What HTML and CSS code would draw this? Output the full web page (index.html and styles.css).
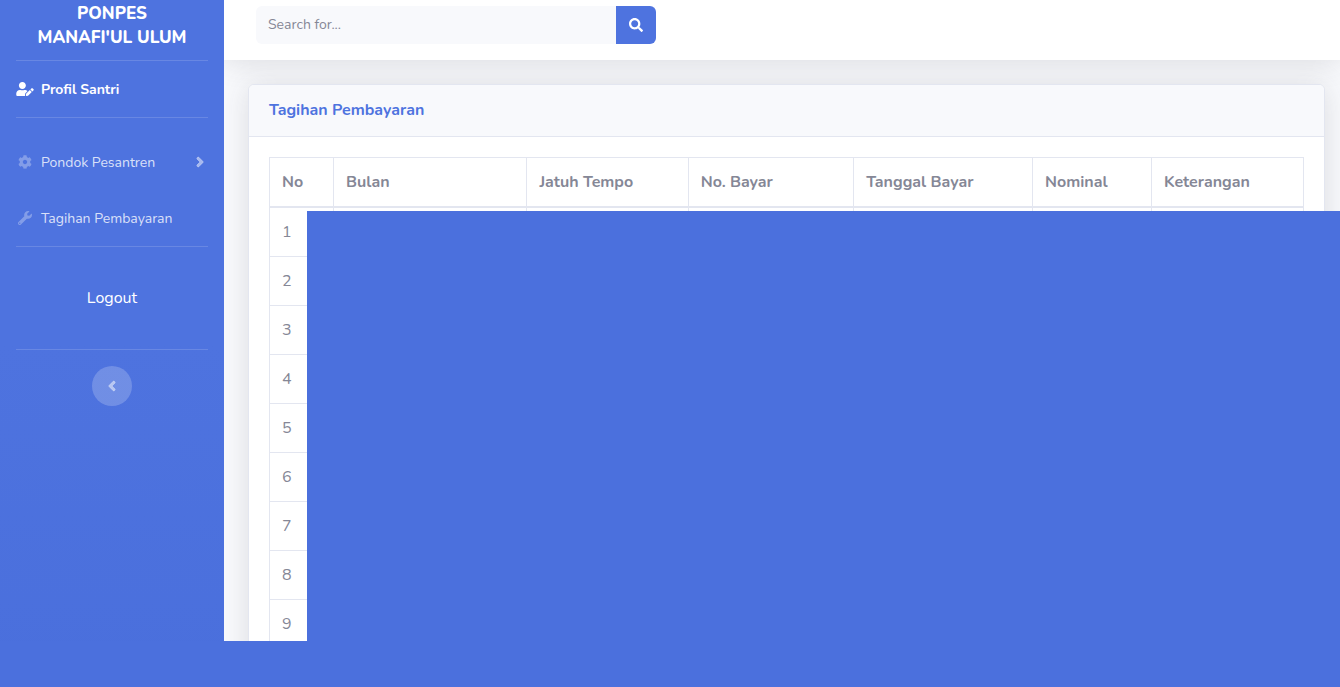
FILE: index.html
```html
<!DOCTYPE html>
<html lang="id">
<head>
<meta charset="utf-8">
<meta name="viewport" content="width=device-width, initial-scale=1">
<title>Tagihan Pembayaran</title>
<link rel="stylesheet" href="styles.css">
</head>
<body>
<div class="wrapper">
  <nav class="sidebar">
    <a class="brand" href="#">PONPES<br>MANAFI'UL ULUM</a>
    <hr class="divider">
    <a class="nav-link active" href="#">
      <svg class="icon" viewBox="0 0 640 512" aria-hidden="true"><path d="M224 256c70.7 0 128-57.3 128-128S294.7 0 224 0 96 57.3 96 128s57.3 128 128 128zm89.6 32h-16.7c-22.2 10.2-46.9 16-72.9 16s-50.6-5.8-72.9-16h-16.7C60.2 288 0 348.2 0 422.4V464c0 26.5 21.5 48 48 48h274.9c-2.4-6.8-3.4-14-2.6-21.3l6.8-60.9 1.2-11.1 7.9-7.9 77.3-77.3c-24.5-27.7-60-45.5-99.9-45.5zm45.3 145.3l-6.8 61c-1.1 10.2 7.5 18.8 17.6 17.6l60.9-6.8 137.9-137.9-71.7-71.7-137.9 137.8zM633 268.9L595.1 231c-9.3-9.3-24.5-9.3-33.8 0l-37.8 37.8-4.1 4.1 71.8 71.7 41.8-41.8c9.3-9.4 9.3-24.5 0-33.9z"/></svg>
      <span class="nav-text">Profil Santri</span>
    </a>
    <hr class="divider divider-gap">
    <a class="nav-link" href="#">
      <svg class="icon" viewBox="0 0 512 512" aria-hidden="true"><path d="M487.4 315.7l-42.6-24.6c4.3-23.2 4.3-47 0-70.2l42.6-24.6c4.9-2.8 7.1-8.6 5.5-14-11.1-35.6-30-67.8-54.7-94.6-3.8-4.1-10-5.1-14.8-2.3L380.8 110c-17.9-15.4-38.5-27.3-60.8-35.1V25.8c0-5.6-3.9-10.5-9.4-11.7-36.7-8.2-74.3-7.8-109.2 0-5.5 1.2-9.4 6.1-9.4 11.7V75c-22.2 7.9-42.8 19.8-60.8 35.1L88.7 85.5c-4.9-2.8-11-1.9-14.8 2.3-24.7 26.7-43.6 58.9-54.7 94.6-1.7 5.4.6 11.2 5.5 14L67.3 221c-4.3 23.2-4.3 47 0 70.2l-42.6 24.6c-4.9 2.8-7.1 8.6-5.5 14 11.1 35.6 30 67.8 54.7 94.6 3.8 4.1 10 5.1 14.8 2.3l42.6-24.6c17.9 15.4 38.5 27.3 60.8 35.1v49.2c0 5.6 3.9 10.5 9.4 11.7 36.7 8.2 74.3 7.8 109.2 0 5.5-1.2 9.4-6.1 9.4-11.7v-49.2c22.2-7.9 42.8-19.8 60.8-35.1l42.6 24.6c4.9 2.8 11 1.9 14.8-2.3 24.7-26.7 43.6-58.9 54.7-94.6 1.5-5.5-.7-11.3-5.6-14.1zM256 336c-44.1 0-80-35.9-80-80s35.9-80 80-80 80 35.9 80 80-35.9 80-80 80z"/></svg>
      <span class="nav-text">Pondok Pesantren</span>
      <svg class="caret" viewBox="0 0 256 512" aria-hidden="true"><path d="M224.3 273l-136 136c-9.4 9.4-24.6 9.4-33.9 0l-22.6-22.6c-9.4-9.4-9.4-24.6 0-33.9l96.4-96.4-96.4-96.4c-9.4-9.4-9.4-24.6 0-33.9L54.3 103c9.4-9.4 24.6-9.4 33.9 0l136 136c9.5 9.4 9.5 24.6.1 34z"/></svg>
    </a>
    <a class="nav-link" href="#">
      <svg class="icon" viewBox="0 0 512 512" aria-hidden="true"><path d="M507.73 109.1c-2.24-9.03-13.54-12.09-20.12-5.51l-74.36 74.36-67.88-11.31-11.31-67.88 74.36-74.36c6.62-6.62 3.43-17.9-5.66-20.16-47.38-11.74-99.55.91-136.58 37.93-39.64 39.64-50.55 97.1-34.05 147.2L18.74 402.76c-24.99 24.99-24.99 65.51 0 90.5 24.99 24.99 65.51 24.99 90.5 0l213.21-213.21c50.12 16.71 107.47 5.68 147.37-34.22 37.07-37.07 49.7-89.32 37.91-136.73zM64 472c-13.25 0-24-10.75-24-24 0-13.26 10.75-24 24-24s24 10.74 24 24c0 13.25-10.75 24-24 24z"/></svg>
      <span class="nav-text">Tagihan Pembayaran</span>
    </a>
    <hr class="divider">
    <a class="logout" href="#">Logout</a>
    <hr class="divider">
    <button class="collapse-btn" type="button" aria-label="Toggle sidebar">
      <svg viewBox="0 0 256 512" aria-hidden="true"><path d="M31.7 239l136-136c9.4-9.4 24.6-9.4 33.9 0l22.6 22.6c9.4 9.4 9.4 24.6 0 33.9L127.9 256l96.4 96.4c9.4 9.4 9.4 24.6 0 33.9L201.7 409c-9.4 9.4-24.6 9.4-33.9 0l-136-136c-9.5-9.4-9.5-24.6-.1-34z"/></svg>
    </button>
  </nav>
  <div class="content">
    <header class="topbar">
      <form class="search">
        <input class="search-input" type="text" placeholder="Search for..." aria-label="Search">
        <button class="search-btn" type="button" aria-label="Submit search">
          <svg viewBox="0 0 512 512" aria-hidden="true"><path d="M505 442.7L405.3 343c-4.5-4.5-10.6-7-17-7H372c27.6-35.3 44-79.7 44-128C416 93.1 322.9 0 208 0S0 93.1 0 208s93.1 208 208 208c48.3 0 92.7-16.4 128-44v16.3c0 6.4 2.5 12.5 7 17l99.7 99.7c9.4 9.4 24.6 9.4 33.9 0l28.3-28.3c9.4-9.4 9.4-24.6.1-34zM208 336c-70.7 0-128-57.2-128-128 0-70.7 57.2-128 128-128 70.7 0 128 57.2 128 128 0 70.7-57.2 128-128 128z"/></svg>
        </button>
      </form>
    </header>
    <main class="main">
      <section class="card">
        <h1 class="card-header">Tagihan Pembayaran</h1>
        <div class="card-body">
          <table class="table">
            <colgroup><col class="c-no"><col class="c-bulan"><col class="c-tempo"><col class="c-bayar"><col class="c-tanggal"><col class="c-nominal"><col class="c-ket"></colgroup>
            <thead>
              <tr><th>No</th><th>Bulan</th><th>Jatuh Tempo</th><th>No. Bayar</th><th>Tanggal Bayar</th><th>Nominal</th><th>Keterangan</th></tr>
            </thead>
            <tbody>
              <tr><td>1</td><td></td><td></td><td></td><td></td><td></td><td></td></tr>
              <tr><td>2</td><td></td><td></td><td></td><td></td><td></td><td></td></tr>
              <tr><td>3</td><td></td><td></td><td></td><td></td><td></td><td></td></tr>
              <tr><td>4</td><td></td><td></td><td></td><td></td><td></td><td></td></tr>
              <tr><td>5</td><td></td><td></td><td></td><td></td><td></td><td></td></tr>
              <tr><td>6</td><td></td><td></td><td></td><td></td><td></td><td></td></tr>
              <tr><td>7</td><td></td><td></td><td></td><td></td><td></td><td></td></tr>
              <tr><td>8</td><td></td><td></td><td></td><td></td><td></td><td></td></tr>
              <tr><td>9</td><td></td><td></td><td></td><td></td><td></td><td></td></tr>
            </tbody>
          </table>
        </div>
      </section>
    </main>
  </div>
  <div class="cover"></div>
  <div class="cover-bottom"></div>
</div>
</body>
</html>
```
FILE: styles.css
```css
* {
  box-sizing: border-box;
}

body {
  margin: 0;
  font-family: Nunito, "Open Sans", "Noto Sans", sans-serif;
  font-size: 16px;
  line-height: 24px;
  color: #858796;
  background: #f8f9fc;
}

a {
  color: inherit;
  text-decoration: none;
}

svg {
  display: block;
  fill: currentColor;
}

.wrapper {
  position: relative;
  display: flex;
  height: 100vh;
  overflow: hidden;
}

.sidebar {
  flex: 0 0 224px;
  display: flex;
  flex-direction: column;
  color: #fff;
  background: linear-gradient(180deg, #4e73df 50%, #4a6fdc 100%);
}

.brand {
  padding: 2px 0 10px;
  font-size: 17px;
  font-weight: 800;
  text-align: center;
}

.divider {
  width: auto;
  margin: 0 16px;
  border: 0;
  border-top: 1px solid rgba(255, 255, 255, 0.15);
}

.divider-gap {
  margin-bottom: 16px;
}

.nav-link {
  display: flex;
  align-items: center;
  height: 56px;
  padding: 0 16px;
  gap: 7px;
  font-size: 14px;
  color: rgba(255, 255, 255, 0.8);
}

.nav-link.active {
  font-weight: 700;
  color: #fff;
}

.nav-text {
  padding-top: 2px;
}

.icon {
  width: 18px;
  height: 14px;
  color: rgba(255, 255, 255, 0.3);
}

.active .icon {
  color: #fff;
}

.caret {
  width: 8px;
  height: 16px;
  margin-left: auto;
  margin-right: 4px;
  color: rgba(255, 255, 255, 0.5);
  stroke: currentColor;
  stroke-width: 20;
}

.logout {
  padding: 39px 0;
  text-align: center;
}

.collapse-btn {
  display: grid;
  place-items: center;
  width: 40px;
  height: 40px;
  margin: 16px auto 0;
  padding: 0;
  border: 0;
  border-radius: 50%;
  color: rgba(255, 255, 255, 0.5);
  background: rgba(255, 255, 255, 0.2);
}

.collapse-btn svg {
  width: 8px;
  height: 16px;
  stroke: currentColor;
  stroke-width: 20;
}

.content {
  flex: 1;
  min-width: 0;
  overflow: hidden;
}

.topbar {
  height: 60px;
  padding: 6px 32px;
  background: #fff;
  box-shadow: 0 2px 28px rgba(58, 59, 69, 0.15);
}

.search {
  display: flex;
  width: 400px;
  height: 38px;
}

.search-input {
  flex: 1;
  min-width: 0;
  padding: 0 12px 2px;
  border: 0;
  border-radius: 6px 0 0 6px;
  font-family: inherit;
  font-size: 14px;
  color: #6e707e;
  background: #f8f9fc;
}

.search-input::placeholder {
  color: #858796;
  opacity: 1;
}

.search-btn {
  display: grid;
  place-items: center;
  width: 40px;
  padding: 0;
  border: 0;
  border-radius: 0 6px 6px 0;
  color: #fff;
  background: #4e73df;
}

.search-btn svg {
  width: 14px;
  height: 14px;
}

.main {
  padding: 24px 15px 24px 24px;
}

.card {
  border: 1px solid #e3e6f0;
  border-radius: 6px;
  background: #fff;
  box-shadow: 0 2px 28px rgba(58, 59, 69, 0.15);
}

.card-header {
  margin: 0;
  padding: 13px 20px 14px;
  border-bottom: 1px solid #e3e6f0;
  border-radius: 5px 5px 0 0;
  font-size: 16px;
  font-weight: 700;
  color: #4e73df;
  background: #f8f9fc;
}

.card-body {
  padding: 20px;
}

.table {
  width: 100%;
  table-layout: fixed;
  border-collapse: collapse;
}

.table th,
.table td {
  height: 49px;
  padding: 12px;
  border: 1px solid #e3e6f0;
  text-align: left;
}

.table th {
  border-bottom-width: 2px;
  font-weight: 700;
}

.c-no { width: 6.2%; }
.c-bulan { width: 18.7%; }
.c-tempo { width: 15.6%; }
.c-bayar { width: 16%; }
.c-tanggal { width: 17.3%; }
.c-nominal { width: 11.5%; }
.c-ket { width: 14.7%; }

/* Panels that hide the private payment rows */
.cover,
.cover-bottom {
  position: absolute;
  right: 0;
  bottom: 0;
  background: #4b70dd;
}

.cover {
  top: 211px;
  left: 307px;
}

.cover-bottom {
  left: 0;
  height: 46px;
}
```
